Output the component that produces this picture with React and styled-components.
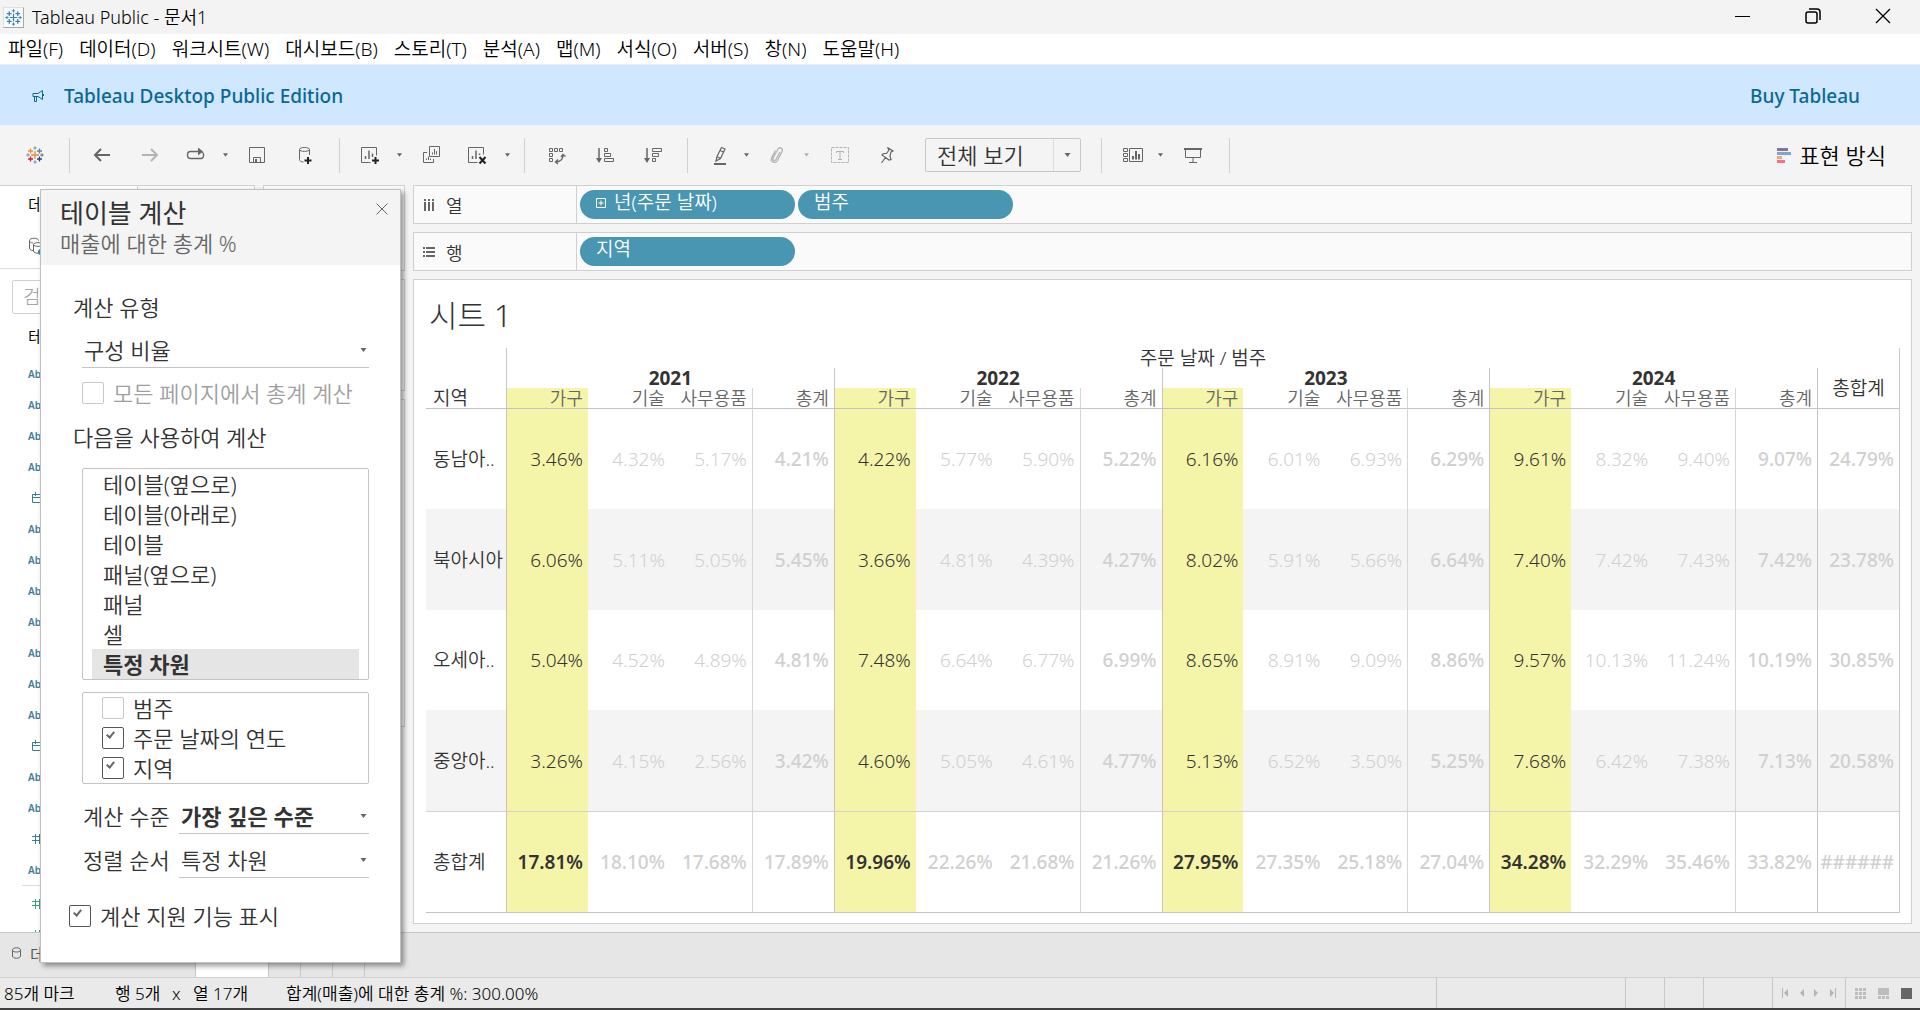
import React from "react";
import styled, { createGlobalStyle, css } from "styled-components";

const GlobalStyle = createGlobalStyle`
  *, *::before, *::after { box-sizing: border-box; }
  body {
    margin: 0;
    background: #f4f4f4;
    color: #000;
    font-family: "Noto Sans", "Noto Sans CJK KR", sans-serif;
  }
  button, input, select {
    font: inherit;
    color: inherit;
    margin: 0;
    padding: 0;
    border: 0;
    background: none;
  }
  a { color: inherit; text-decoration: none; }
  svg { display: block; flex: none; }
`;

const Window = styled.div`
  position: relative;
  display: flex;
  flex-direction: column;
  height: 100vh;
  min-width: 1280px;
  border-bottom: 2px solid #404040;
  overflow: hidden;
`;

/* ---------- title bar, menu, banner ---------- */

const TitleBar = styled.header`
  display: flex;
  align-items: center;
  flex: none;
  height: 34px;
  padding: 0 2px 0 3px;
  background: #f3f3f3;
  font-size: 18px;
  font-weight: 350;
  line-height: 24px;
`;

const AppIcon = styled.span`
  display: grid;
  place-items: center;
  width: 21px;
  height: 21px;
  margin-right: 8px;
  background: #fafafa;
  border: 1px solid #e0e0e0;
  border-right-color: #a8a8a8;
  border-bottom-color: #a8a8a8;
`;

const WindowButtons = styled.div`
  display: flex;
  height: 100%;
  margin-left: auto;
`;

const WindowButton = styled.button`
  display: grid;
  place-items: center;
  width: 70px;
  height: 32px;
`;

const MenuBar = styled.nav`
  display: flex;
  align-items: center;
  flex: none;
  gap: 16px;
  height: 31px;
  padding-left: 8px;
  background: #fff;
  border-bottom: 1px solid #ececec;
  font-size: 19px;
  font-weight: 350;
  line-height: 26px;
  white-space: nowrap;
`;

const Banner = styled.div`
  display: flex;
  align-items: center;
  flex: none;
  height: 60px;
  padding: 2px 60px 0 32px;
  background: #cfe8ff;
  color: #0b6795;
  font-size: 19px;
  font-weight: 500;
`;

const BannerLink = styled.a`
  margin-left: ${(p) => (p.$end ? "auto" : "20px")};
`;

/* ---------- toolbar ---------- */

const Toolbar = styled.div`
  display: flex;
  align-items: center;
  flex: none;
  height: 60px;
  background: #f4f4f4;
  color: #666;
`;

const ToolGroup = styled.div`
  display: flex;
  align-items: center;
  height: 35px;
  padding-left: ${(p) => p.$start || 0}px;
  padding-right: ${(p) => p.$end || 0}px;
  border-right: 1px solid #d0d0d0;
`;

const Tool = styled.button`
  display: grid;
  place-items: center;
  width: ${(p) => p.$w || 48}px;
  height: 32px;
  opacity: ${(p) => (p.disabled ? 0.45 : 1)};
`;

const FitBox = styled.div`
  display: grid;
  grid-template-columns: 1fr 27px;
  align-items: center;
  width: 156px;
  height: 34px;
  margin-left: 22px;
  border: 1px solid #c8c8c8;
  border-radius: 2px;
  color: #333;
`;

const FitSelect = styled.select`
  grid-area: 1 / 1 / 2 / 3;
  height: 32px;
  padding-left: 11px;
  appearance: none;
  font-size: 22px;
  font-weight: 350;
`;

const FitCaret = styled.span`
  grid-area: 1 / 2;
  display: grid;
  place-items: center;
  height: 32px;
  border-left: 1px solid #dcdcdc;
  pointer-events: none;
`;

const ShowMe = styled.button`
  display: flex;
  align-items: center;
  gap: 8px;
  margin-left: auto;
  padding-right: 34px;
  color: #000;
  font-size: 22px;
  font-weight: 350;
  line-height: 30px;
`;

/* ---------- workspace ---------- */

const Workspace = styled.div`
  display: flex;
  flex: 1;
  min-height: 0;
  padding-right: 8px;
  padding-bottom: 8px;
`;

const DataPane = styled.aside`
  display: flex;
  flex-direction: column;
  flex: none;
  width: 255px;
  margin-bottom: -8px;
  background: #fff;
  border: 1px solid #d0d0d0;
  border-width: 1px 1px 0 0;
  overflow: hidden;
`;

const PaneTabs = styled.div`
  display: grid;
  grid-template-columns: 137px 1fr;
  flex: none;
  height: 34px;
  font-size: 17px;
  font-weight: 350;
`;

const PaneTab = styled.button`
  padding-left: 28px;
  text-align: left;
  background: ${(p) => (p.$active ? "#fff" : "#fafafa")};
  border-left: ${(p) => (p.$active ? "0" : "1px solid #d0d0d0")};
`;

const SourceRow = styled.div`
  display: flex;
  align-items: center;
  flex: none;
  height: 49px;
  padding: 4px 0 0 28px;
  border-bottom: 1px solid #dcdcdc;
`;

const SearchInput = styled.input`
  flex: none;
  width: 200px;
  height: 34px;
  margin: 11px 0 0 12px;
  padding-left: 10px;
  border: 1px solid #d0d0d0;
  border-radius: 2px;
  font-size: 19px;
  font-weight: 300;
  &::placeholder { color: #999; }
`;

const PaneHeading = styled.h2`
  flex: none;
  margin: 11px 0 0 28px;
  font-size: 17px;
  font-weight: 350;
  line-height: 24px;
`;

const FieldList = styled.ul`
  flex: none;
  margin: ${(p) => (p.$measures ? "0 0 0 22px" : "9px 0 0")};
  padding: ${(p) => (p.$measures ? "2px 0 0 6px" : "0 0 0 28px")};
  border-top: ${(p) => (p.$measures ? "1px solid #dcdcdc" : "0")};
  list-style: none;
`;

const Field = styled.li`
  display: flex;
  align-items: center;
  height: 31px;
  color: ${(p) => (p.$measure ? "#3aa17e" : "#3a7d9c")};
  font-size: 10px;
  font-weight: 600;
  svg { margin-left: 4px; }
`;

const CardColumn = styled.div`
  display: flex;
  flex-direction: column;
  flex: none;
  gap: 8px;
  width: 142px;
  margin: 0 8px;
`;

const Card = styled.section`
  height: ${(p) => p.$h}px;
  background: #fafafa;
  border: 1px solid #d0d0d0;
`;

const Main = styled.main`
  display: flex;
  flex: 1;
  flex-direction: column;
  gap: 8px;
  min-width: 0;
`;

const Shelf = styled.section`
  display: grid;
  grid-template-columns: 163px 1fr;
  flex: none;
  height: 39px;
  background: #fafafa;
  border: 1px solid #d0d0d0;
`;

const ShelfLabel = styled.h3`
  display: flex;
  align-items: center;
  gap: 11px;
  margin: 0;
  padding-left: 9px;
  border-right: 1px solid #d0d0d0;
  color: #333;
  font-size: 18px;
  font-weight: 350;
`;

const Pills = styled.div`
  display: flex;
  align-items: center;
  gap: 3px;
  padding-left: 3px;
`;

const Pill = styled.button`
  display: flex;
  align-items: center;
  gap: 8px;
  width: 215px;
  height: 29px;
  padding: 0 16px 4px;
  border-radius: 15px;
  background: #4996b2;
  color: #fff;
  font-size: 19px;
  font-weight: 350;
  line-height: 25px;
  white-space: nowrap;
`;

const Sheet = styled.section`
  flex: 1;
  min-height: 0;
  padding: 15px 11px 0 12px;
  background: #fff;
  border: 1px solid #d0d0d0;
  overflow: hidden;
`;

const SheetTitle = styled.h1`
  margin: 0;
  padding-left: 3px;
  color: #333;
  font-size: 31px;
  font-weight: 300;
  line-height: 40px;
`;

/* ---------- crosstab ---------- */

const Crosstab = styled.table`
  width: 100%;
  margin-top: 13px;
  table-layout: fixed;
  border-collapse: separate;
  border-spacing: 0;
  border-right: 1px solid #c8c8c8;
  color: #333;
  font-size: 19px;
  line-height: 20px;
`;

const RowHeaderCol = styled.col`
  width: 80px;
`;

const edge = css`
  border-left: ${(p) =>
    p.$edge === "year" ? "1px solid #c4c4c4" : p.$edge === "total" ? "1px solid #d6d6d6" : "0"};
`;

const HeadCell = styled.th`
  ${edge}
  height: 20px;
  padding: 0;
  font-weight: ${(p) => (p.$bold ? 700 : 350)};
  white-space: nowrap;
  border-bottom: ${(p) => (p.$last ? "1px solid #c4c4c4" : "0")};
`;

const CornerCell = styled(HeadCell)`
  padding-left: 7px;
  text-align: left;
  vertical-align: bottom;
`;

const CategoryCell = styled(HeadCell)`
  height: 21px;
  padding-right: 5px;
  text-align: right;
  color: #666;
  font-size: 18px;
  background: ${(p) => (p.$hot ? "#f5f5a9" : "transparent")};
`;

const BodyRow = styled.tr`
  height: ${(p) => (p.$grand ? 102 : p.$band ? 101 : 100)}px;
  background: ${(p) => (p.$band ? "#f4f4f4" : "#fff")};
  th, td {
    border-top: ${(p) => (p.$grand ? "1px solid #d2d2d2" : "0")};
    border-bottom: ${(p) => (p.$grand ? "1px solid #c4c4c4" : "0")};
  }
`;

const RowHeader = styled.th`
  padding: 0 0 0 7px;
  text-align: left;
  font-weight: 350;
  white-space: nowrap;
`;

const Value = styled.td`
  ${edge}
  padding: 0 5px 0 0;
  text-align: right;
  white-space: nowrap;
  color: ${(p) => (p.$hot ? "#333" : "#d0d0d0")};
  background: ${(p) => (p.$hot ? "#f5f5a9" : "transparent")};
  font-weight: ${(p) => p.$weight};
`;

/* ---------- bottom bars ---------- */

const SheetTabs = styled.div`
  display: flex;
  flex: none;
  height: 46px;
  background: #e6e6e6;
  border-top: 1px solid #c8c8c8;
  border-bottom: 1px solid #d0d0d0;
  color: #555;
  font-size: 17px;
  font-weight: 350;
`;

const SourceTab = styled.button`
  display: flex;
  align-items: center;
  gap: 8px;
  width: 195px;
  padding: 0 0 4px 12px;
`;

const SheetTab = styled.button`
  width: ${(p) => (p.$active ? 74 : 32)}px;
  background: ${(p) => (p.$active ? "#fff" : "transparent")};
  border-left: ${(p) => (p.$active ? "1px solid #c8c8c8" : "0")};
  border-right: 1px solid #c8c8c8;
`;

const StatusBar = styled.footer`
  display: flex;
  align-items: stretch;
  flex: none;
  height: 30px;
  padding-left: 4px;
  background: #eaeaea;
  font-size: 17px;
  font-weight: 350;
  line-height: 32px;
  white-space: pre;
`;

const StatusText = styled.span`
  width: ${(p) => p.$w}px;
`;

const StatusSlots = styled.div`
  display: flex;
  margin-left: auto;
`;

const StatusSlot = styled.div`
  display: flex;
  align-items: center;
  justify-content: center;
  gap: ${(p) => p.$gap || 0}px;
  width: ${(p) => p.$w}px;
  border-left: 1px solid #c8c8c8;
`;

const TinyButton = styled.button`
  display: grid;
  place-items: center;
`;

/* ---------- table calculation dialog ---------- */

const Dialog = styled.section`
  position: absolute;
  left: 40px;
  top: 189px;
  width: 361px;
  height: 774px;
  background: #fff;
  border: 1px solid #c0c0c0;
  box-shadow: 3px 3px 5px rgba(0, 0, 0, 0.4);
  color: #333;
  font-size: 22px;
  font-weight: 350;
  line-height: 30px;
  white-space: nowrap;
`;

const DialogHead = styled.header`
  display: flex;
  justify-content: space-between;
  align-items: flex-start;
  height: 75px;
  padding: 7px 12px 0 19px;
  background: #f4f4f4;
`;

const DialogTitle = styled.h2`
  margin: 0;
  font-size: 26px;
  font-weight: 400;
  line-height: 32px;
`;

const DialogSubtitle = styled.p`
  margin: 0;
  color: #666;
  line-height: 28px;
`;

const CloseButton = styled.button`
  padding-top: 6px;
`;

const DialogBody = styled.form`
  padding: 27px 31px 0 28px;
`;

const Label = styled.h3`
  margin: 0 0 0 4px;
  font-size: 22px;
  font-weight: 350;
`;

const ScopeHeading = styled(Label)`
  margin-top: 14px;
`;

const Indent = styled.div`
  padding-left: 13px;
`;

const DropRow = styled.div`
  display: grid;
  grid-template-columns: ${(p) => (p.$labelled ? "97px 1fr" : "1fr")};
  align-items: center;
  margin-top: ${(p) => p.$gap}px;
`;

const DropLabel = styled.label`
  padding-left: 1px;
`;

const DropBox = styled.div`
  display: grid;
  grid-template-columns: 1fr 16px;
  align-items: center;
  height: 36px;
  border-bottom: 1px solid #c4c4c4;
`;

const DropSelect = styled.select`
  grid-area: 1 / 1 / 2 / 3;
  height: 34px;
  padding-left: 2px;
  appearance: none;
  font-weight: ${(p) => (p.$bold ? 700 : 350)};
`;

const DropCaret = styled.span`
  grid-area: 1 / 2;
  justify-self: end;
  padding-right: 2px;
  pointer-events: none;
`;

const CheckLabel = styled.label`
  display: flex;
  align-items: center;
  gap: 9px;
  height: 30px;
  color: ${(p) => (p.$off ? "#a0a0a0" : "#333")};
`;

const PageTotals = styled.div`
  margin-top: 10px;
`;

const CheckBox = styled.input`
  position: relative;
  flex: none;
  width: 22px;
  height: 22px;
  appearance: none;
  background: #fff;
  border: 1px solid #c8c8c8;
  border-radius: 2px;
  &:checked { border-color: #555; }
  &:checked::before {
    content: "";
    position: absolute;
    left: 5px;
    top: 2px;
    width: 5px;
    height: 8px;
    border: solid #666;
    border-width: 0 2px 2px 0;
    transform: rotate(40deg);
  }
`;

const ScopeList = styled.fieldset`
  margin: 16px 0 0;
  padding: 0 9px;
  border: 1px solid #c4c4c4;
  border-radius: 2px;
  min-width: 0;
`;

const ScopeOption = styled.label`
  display: block;
  height: 30px;
  padding-left: 11px;
  background: ${(p) => (p.$selected ? "#e5e5e5" : "#fff")};
  font-weight: ${(p) => (p.$selected ? 700 : 350)};
`;

const ScopeRadio = styled.input`
  position: absolute;
  width: 1px;
  height: 1px;
  appearance: none;
  opacity: 0;
`;

const DimensionList = styled.fieldset`
  margin: 12px 0 0;
  padding: 0 0 0 19px;
  border: 1px solid #c4c4c4;
  border-radius: 2px;
  min-width: 0;
`;

const AssistRow = styled.div`
  margin-top: 23px;
`;

/* ---------- drawings ---------- */

const markPluses = [
  [9, 9, 4, "#eb8a3c"],
  [4.5, 5, 2.5, "#e8912d"],
  [13.5, 5, 2.5, "#5b879b"],
  [4.5, 13, 2.5, "#c72035"],
  [13.5, 13, 2.5, "#1f457e"],
  [9, 2, 1.7, "#7099a6"],
  [9, 16, 1.7, "#7b86b3"],
  [2, 9, 1.7, "#7b86b3"],
  [16, 9, 1.7, "#5b6591"],
];

function TableauMark({ size = 18, mono }) {
  return (
    <svg width={size} height={size} viewBox="0 0 18 18" fill="none" aria-hidden="true">
      {markPluses.map(([x, y, r, c]) => (
        <path
          key={`${x}-${y}`}
          d={`M${x - r} ${y}H${x + r}M${x} ${y - r}V${y + r}`}
          stroke={mono ? "#3385b5" : c}
          strokeWidth={r > 2 ? 1.3 : 1}
        />
      ))}
    </svg>
  );
}

function Caret({ color = "#666", w = 5 }) {
  return (
    <svg width={w} height="4" viewBox="0 0 6 4" aria-hidden="true">
      <path d="M0 0H6L3 4Z" fill={color} />
    </svg>
  );
}

function Icon({ w = 20, h = 20, children, color = "#666", sw = 1 }) {
  return (
    <svg width={w} height={h} viewBox={`0 0 ${w} ${h}`} fill="none" stroke={color} strokeWidth={sw} aria-hidden="true">
      {children}
    </svg>
  );
}

const icons = {
  back: <Icon sw={2}><path d="M18 10H3M9 4L3 10L9 16" /></Icon>,
  forward: <Icon sw={2}><path d="M2 10H17M11 4L17 10L11 16" /></Icon>,
  redo: <Icon><path strokeWidth="1.4" d="M13 6.5H4.5A3 3.5 0 0 0 4.5 13.5H15.5A3 3.5 0 0 0 16 7" /><path d="M12 2.5V10.5L17 6.5Z" fill="#666" stroke="none" /></Icon>,
  save: <Icon><path d="M2.500 2.500H17.500V17.500H2.500ZM6.500 17.500V12.500H13.500V17.500" /><path d="M8 14H10V17H8Z" fill="#666" stroke="none" /></Icon>,
  source: <Icon><path d="M14.500 10V4.500C14.500 1.800 4.500 1.800 4.500 4.500V14.500C4.500 16 6 17 8.500 17M4.500 4.500C4.500 7 14.500 7 14.500 4.500" /><path stroke="#222" strokeWidth="2" d="M13 12V19M9.500 15.500H16.500" /></Icon>,
  newSheet: <Icon><path d="M10.500 17.500H1.500V2.500H16.500V10.500" /><path strokeWidth="1.500" d="M5.500 14V11M9 14V5.500M12.500 12V8.500" /><path stroke="#222" strokeWidth="2" d="M15.500 12V19M12 15.500H19" /></Icon>,
  duplicate: <Icon><path d="M8.500 1.500H18.500V11.500H8.500ZM6 7.500H2.500V17.500H12.500V14" /><path d="M11.500 9.500V7.500M13.500 9.500V4M15.500 9.500V6M5.500 15V13.500M7.500 15V11.500M9.500 15V13.500" /></Icon>,
  clear: <Icon><path d="M10.500 17.500H1.500V2.500H16.500V9.500" /><path strokeWidth="1.500" d="M5.500 14V11M9 14V5.500M12.500 10V8.500" /><path stroke="#222" strokeWidth="2" d="M12.500 12L18.500 18.500M18.500 12L12.500 18.500" /></Icon>,
  swap: <Icon><path d="M2.500 3.500H5.500V6.500H2.500ZM7.500 3.500H10.500V6.500H7.500ZM12.500 3.500H15.500V6.500H12.500ZM2.500 8.500H5.500V11.500H2.500ZM2.500 13.500H5.500V16.500H2.500Z" /><path strokeWidth="1.400" d="M16 10C16 14 14 16.500 9 17M14 12L16 9.500L18.500 11.500M11 14.500L8.500 17L11 19" /></Icon>,
  asc: <Icon><path strokeWidth="1.500" d="M4 3V15" /><path fill="#666" stroke="none" d="M1 13H7L4 18Z" /><path d="M9.500 3.500H12.500V6.500H9.500ZM9.500 8.500H15.500V11.500H9.500ZM9.500 13.500H18.500V16.500H9.500Z" /></Icon>,
  desc: <Icon><path strokeWidth="1.500" d="M4 3V15" /><path fill="#666" stroke="none" d="M1 13H7L4 18Z" /><path d="M9.500 3.500H18.500V6.500H9.500ZM9.500 8.500H15.500V11.500H9.500ZM9.500 13.500H12.500V16.500H9.500Z" /></Icon>,
  highlight: <Icon><path strokeWidth="1.200" d="M11.500 2.500L15 4L10.500 13.500L6 16L7 11.500ZM7 11.500L10.500 13.500M10 5.500L13.500 7" /><path strokeWidth="2" d="M4 19H16" /></Icon>,
  clip: <Icon><path strokeWidth="1.300" d="M13 7L9 14.500C8 16.500 5 15.500 6 13L11 4C12.500 1.500 16.500 3.500 15 6.500L10.500 15.500C8.500 19 3 17 4.500 13L8.500 5.500" /></Icon>,
  text: <Icon><path strokeDasharray="3 1" d="M1.500 2.500H18.500V17.500H1.500Z" /><path d="M6.500 8V6.500H13.500V8M10 6.500V14.500M8 14.500H12" /></Icon>,
  pin: <Icon><path strokeWidth="1.200" d="M10.500 2.500L16 6L14 7L13 11L14 14.500L12 15L5 10L6.500 8.500L9.500 8.500L12 5ZM8.500 12.500L4.500 18" /></Icon>,
  cards: <Icon><path d="M.5 3.500H4.500V6.500H.5ZM.5 8.500H4.500V11.500H.5ZM.5 13.500H4.500V16.500H.5ZM6.500 3.500H19.500V16.500H6.500Z" /><path strokeWidth="2" d="M10 14.500V11M13 14.500V6M16 14.500V9" /></Icon>,
  present: <Icon><path strokeWidth="2" d="M1 4H19" /><path d="M2.500 4V12.500H17.500V4M10 12.500V17.500M6 17.500H14" /></Icon>,
};

function CalendarIcon() {
  return (
    <Icon w={12} h={12} color="#3a7d9c">
      <path d="M.5 2.500H11.500V10.500H.5ZM.5 5.500H11.500M3.500 0V4M8.500 0V4" />
    </Icon>
  );
}

function HashIcon({ color }) {
  return (
    <Icon w={10} h={12} color={color}>
      <path d="M3.500 1V11M7.500 1V11M0 3.500H10M0 7.500H10" />
    </Icon>
  );
}

/* ---------- data ---------- */

const menus = ["파일(F)", "데이터(D)", "워크시트(W)", "대시보드(B)", "스토리(T)", "분석(A)", "맵(M)", "서식(O)", "서버(S)", "창(N)", "도움말(H)"];
const years = ["2021", "2022", "2023", "2024"];
const categories = ["가구", "기술", "사무용품", "총계"];

const rows = [
  ["동남아..", "3.46 4.32 5.17 4.21 4.22 5.77 5.90 5.22 6.16 6.01 6.93 6.29 9.61 8.32 9.40 9.07 24.79"],
  ["북아시아", "6.06 5.11 5.05 5.45 3.66 4.81 4.39 4.27 8.02 5.91 5.66 6.64 7.40 7.42 7.43 7.42 23.78"],
  ["오세아..", "5.04 4.52 4.89 4.81 7.48 6.64 6.77 6.99 8.65 8.91 9.09 8.86 9.57 10.13 11.24 10.19 30.85"],
  ["중앙아..", "3.26 4.15 2.56 3.42 4.60 5.05 4.61 4.77 5.13 6.52 3.50 5.25 7.68 6.42 7.38 7.13 20.58"],
  ["총합계", "17.81 18.10 17.68 17.89 19.96 22.26 21.68 21.26 27.95 27.35 25.18 27.04 34.28 32.29 35.46 33.82 ######"],
].map(([name, values]) => ({ name, values: values.split(" ") }));

const fields = ["a", "a", "a", "a", "d", "a", "a", "a", "a", "a", "a", "a", "d", "a", "a", "n", "a"];
const scopes = ["테이블(옆으로)", "테이블(아래로)", "테이블", "패널(옆으로)", "패널", "셀", "특정 차원"];
const dimensions = [["범주", false], ["주문 날짜의 연도", true], ["지역", true]];

const edgeAt = (i) => (i % 4 === 0 ? "year" : i % 4 === 3 ? "total" : "none");

function SalesTable() {
  return (
    <Crosstab>
      <colgroup>
        <RowHeaderCol />
        {rows[0].values.map((_, i) => <col key={i} />)}
      </colgroup>
      <thead>
        <tr>
          <CornerCell rowSpan={3} $last scope="col">지역</CornerCell>
          <HeadCell colSpan={17} $edge="year">주문 날짜 / 범주</HeadCell>
        </tr>
        <tr>
          {years.map((y) => <HeadCell key={y} colSpan={4} $edge="year" $bold>{y}</HeadCell>)}
          <HeadCell rowSpan={2} $edge="year" $last>총합계</HeadCell>
        </tr>
        <tr>
          {years.flatMap((y) =>
            categories.map((c, i) => (
              <CategoryCell key={y + c} $edge={edgeAt(i)} $hot={i === 0} $last scope="col">{c}</CategoryCell>
            ))
          )}
        </tr>
      </thead>
      <tbody>
        {rows.map((row, r) => {
          const grand = r === 4;
          return (
            <BodyRow key={row.name} $band={r % 2 === 1} $grand={grand}>
              <RowHeader scope="row">{row.name}</RowHeader>
              {row.values.map((v, i) => {
                const hot = i % 4 === 0 && i < 16;
                const total = i % 4 === 3 || i === 16;
                const weight = grand ? (hot ? 600 : 500) : total ? 500 : hot ? 350 : 300;
                return (
                  <Value key={i} $edge={edgeAt(i)} $hot={hot} $weight={weight}>
                    {v.startsWith("#") ? v : `${v}%`}
                  </Value>
                );
              })}
            </BodyRow>
          );
        })}
      </tbody>
    </Crosstab>
  );
}

function Drop({ id, value, bold }) {
  return (
    <DropBox>
      <DropSelect id={id} $bold={bold} defaultValue={value} aria-label={id === "calc-type" ? "계산 유형" : undefined}>
        <option>{value}</option>
      </DropSelect>
      <DropCaret><Caret w={7} /></DropCaret>
    </DropBox>
  );
}

function TableCalcDialog() {
  return (
    <Dialog role="dialog" aria-labelledby="calc-title">
      <DialogHead>
        <div>
          <DialogTitle id="calc-title">테이블 계산</DialogTitle>
          <DialogSubtitle>매출에 대한 총계 %</DialogSubtitle>
        </div>
        <CloseButton aria-label="닫기">
          <Icon w={12} h={12}><path d="M.5 .5L11.500 11.500M11.500 .5L.5 11.500" /></Icon>
        </CloseButton>
      </DialogHead>
      <DialogBody>
        <Label>계산 유형</Label>
        <Indent>
          <DropRow $gap={10}><Drop id="calc-type" value="구성 비율" /></DropRow>
          <PageTotals>
            <CheckLabel $off>
              <CheckBox type="checkbox" disabled />
              모든 페이지에서 총계 계산
            </CheckLabel>
          </PageTotals>
        </Indent>
        <ScopeHeading>다음을 사용하여 계산</ScopeHeading>
        <Indent>
          <ScopeList aria-label="다음을 사용하여 계산">
            {scopes.map((s) => (
              <ScopeOption key={s} $selected={s === "특정 차원"}>
                <ScopeRadio type="radio" name="scope" value={s} defaultChecked={s === "특정 차원"} />
                {s}
              </ScopeOption>
            ))}
          </ScopeList>
          <DimensionList aria-label="특정 차원">
            {dimensions.map(([name, on]) => (
              <CheckLabel key={name}>
                <CheckBox type="checkbox" defaultChecked={on} />
                {name}
              </CheckLabel>
            ))}
          </DimensionList>
          <DropRow $labelled $gap={14}>
            <DropLabel htmlFor="calc-level">계산 수준</DropLabel>
            <Drop id="calc-level" value="가장 깊은 수준" bold />
          </DropRow>
          <DropRow $labelled $gap={8}>
            <DropLabel htmlFor="calc-sort">정렬 순서</DropLabel>
            <Drop id="calc-sort" value="특정 차원" />
          </DropRow>
        </Indent>
        <AssistRow>
          <CheckLabel>
            <CheckBox type="checkbox" defaultChecked />
            계산 지원 기능 표시
          </CheckLabel>
        </AssistRow>
      </DialogBody>
    </Dialog>
  );
}

export default function App() {
  return (
    <Window>
      <GlobalStyle />
      <TitleBar>
        <AppIcon><TableauMark size={17} mono /></AppIcon>
        Tableau Public - 문서1
        <WindowButtons>
          <WindowButton aria-label="최소화">
            <Icon w={16} h={16} color="#000"><path d="M0 8.500H15" /></Icon>
          </WindowButton>
          <WindowButton aria-label="이전 크기로 복원">
            <Icon w={16} h={16} color="#000" sw={1.5}>
              <rect x="1" y="4" width="11" height="11" rx="2" />
              <path d="M4 1H12A3 3 0 0 1 15 4V12" />
            </Icon>
          </WindowButton>
          <WindowButton aria-label="닫기">
            <Icon w={16} h={16} color="#000" sw={1.3}><path d="M1 1L15 15M15 1L1 15" /></Icon>
          </WindowButton>
        </WindowButtons>
      </TitleBar>
      <MenuBar>
        {menus.map((m) => <button key={m}>{m}</button>)}
      </MenuBar>
      <Banner>
        <Icon w={12} h={12} color="#0b6795">
          <path d="M1 3.500H6L10.500 .5V9.500L6 6.500H1ZM2.500 6.500V11.500H4.500V6.500M11.500 4V6" />
        </Icon>
        <BannerLink href="#desktop">Tableau Desktop Public Edition</BannerLink>
        <BannerLink href="#buy" $end>Buy Tableau</BannerLink>
      </Banner>

      <Toolbar>
        <ToolGroup>
          <Tool $w={69} aria-label="시작 페이지"><TableauMark /></Tool>
        </ToolGroup>
        <ToolGroup $start={8} $end={10}>
          <Tool aria-label="실행 취소">{icons.back}</Tool>
          <Tool aria-label="다시 실행" disabled>{icons.forward}</Tool>
          <Tool $w={44} aria-label="재생">{icons.redo}</Tool>
          <Tool $w={15} aria-label="재생 메뉴"><Caret /></Tool>
          <Tool aria-label="저장">{icons.save}</Tool>
          <Tool aria-label="새 데이터 원본">{icons.source}</Tool>
        </ToolGroup>
        <ToolGroup $start={10} $end={10}>
          <Tool $w={40} aria-label="새 워크시트">{icons.newSheet}</Tool>
          <Tool $w={18} aria-label="새 워크시트 메뉴"><Caret /></Tool>
          <Tool $w={46} aria-label="복제">{icons.duplicate}</Tool>
          <Tool $w={46} aria-label="시트 지우기">{icons.clear}</Tool>
          <Tool $w={14} aria-label="시트 지우기 메뉴"><Caret /></Tool>
        </ToolGroup>
        <ToolGroup $start={8} $end={10}>
          <Tool aria-label="행과 열 바꾸기">{icons.swap}</Tool>
          <Tool aria-label="오름차순 정렬">{icons.asc}</Tool>
          <Tool aria-label="내림차순 정렬">{icons.desc}</Tool>
        </ToolGroup>
        <ToolGroup $start={10} $end={20}>
          <Tool $w={44} aria-label="하이라이트">{icons.highlight}</Tool>
          <Tool $w={8} aria-label="하이라이트 메뉴"><Caret /></Tool>
          <Tool $w={53} aria-label="그룹" disabled>{icons.clip}</Tool>
          <Tool $w={6} aria-label="그룹 메뉴" disabled><Caret /></Tool>
          <Tool $w={62} aria-label="마크 레이블" disabled>{icons.text}</Tool>
          <Tool $w={32} aria-label="축 고정">{icons.pin}</Tool>
          <FitBox>
            <FitSelect aria-label="맞춤" defaultValue="전체 보기"><option>전체 보기</option></FitSelect>
            <FitCaret><Caret w={7} /></FitCaret>
          </FitBox>
        </ToolGroup>
        <ToolGroup $start={8} $end={7}>
          <Tool $w={46} aria-label="카드 표시">{icons.cards}</Tool>
          <Tool $w={8} aria-label="카드 메뉴"><Caret /></Tool>
          <Tool $w={58} aria-label="프레젠테이션">{icons.present}</Tool>
        </ToolGroup>
        <ShowMe>
          <svg width="14" height="15" viewBox="0 0 14 15" aria-hidden="true">
            <path fill="#86759b" d="M0 0H11V3H0Z" />
            <path fill="#7fa6cf" d="M0 4H14V7H0Z" />
            <path fill="#f7a77b" d="M0 8H5V11H0Z" />
            <path fill="#fb6f80" d="M0 12H8V15H0Z" />
          </svg>
          표현 방식
        </ShowMe>
      </Toolbar>

      <Workspace>
        <DataPane>
          <PaneTabs>
            <PaneTab $active>데이터</PaneTab>
            <PaneTab aria-label="분석" />
          </PaneTabs>
          <SourceRow>
            <Icon w={18} h={18}>
              <path d="M1.500 3.500C1.500 .5 10.500 .5 10.500 3.500M1.500 3.500V11C1.500 13 4 13.500 5 13.500M5.500 7.500C5.500 5 14.500 5 14.500 7.500V14C14.500 17 5.500 17 5.500 14ZM5.500 7.500C5.500 10 14.500 10 14.500 7.500M1.500 3.500C1.500 5 3 6 5 6" />
              <circle cx="13" cy="15" r="3" fill="#2f8bab" stroke="none" />
            </Icon>
          </SourceRow>
          <SearchInput aria-label="검색" placeholder="검색" />
          <PaneHeading>테이블</PaneHeading>
          <FieldList>
            {fields.map((kind, i) => (
              <Field key={i}>
                {kind === "a" ? "Abc" : kind === "d" ? <CalendarIcon /> : <HashIcon color="#3a7d9c" />}
              </Field>
            ))}
          </FieldList>
          <FieldList $measures>
            <Field $measure><HashIcon color="#3aa17e" /></Field>
            <Field $measure><HashIcon color="#3aa17e" /></Field>
          </FieldList>
        </DataPane>
        <CardColumn>
          <Card $h={86} />
          <Card $h={112} />
          <Card $h={328} />
        </CardColumn>
        <Main>
          <Shelf>
            <ShelfLabel>
              <Icon w={12} h={12} sw={2}><path d="M2 0V2M2 3V12M6 0V2M6 3V12M10 0V2M10 3V12" /></Icon>
              열
            </ShelfLabel>
            <Pills>
              <Pill>
                <Icon w={10} h={10} color="#fff"><path d="M.5 .5H9.500V9.500H.5ZM5 2.500V7.500M2.500 5H7.500" /></Icon>
                년(주문 날짜)
              </Pill>
              <Pill>범주</Pill>
            </Pills>
          </Shelf>
          <Shelf>
            <ShelfLabel>
              <Icon w={12} h={12} sw={2}><path d="M0 2H2M3 2H12M0 6H2M3 6H12M0 10H2M3 10H12" /></Icon>
              행
            </ShelfLabel>
            <Pills><Pill>지역</Pill></Pills>
          </Shelf>
          <Sheet>
            <SheetTitle>시트 1</SheetTitle>
            <SalesTable />
          </Sheet>
        </Main>
      </Workspace>

      <SheetTabs>
        <SourceTab>
          <Icon w={10} h={12}><path d="M.5 3C.5 0 8.500 0 8.500 3V9C8.500 12 .5 12 .5 9ZM.5 3.500C.5 5.500 8.500 5.500 8.500 3.500" /></Icon>
          데이터 원본
        </SourceTab>
        <SheetTab $active aria-label="시트 1" />
        <SheetTab aria-label="새 워크시트" />
        <SheetTab aria-label="새 대시보드" />
        <SheetTab aria-label="새 스토리" />
      </SheetTabs>
      <StatusBar>
        <StatusText $w={111}>85개 마크</StatusText>
        <StatusText $w={57}>행 5개</StatusText>
        <StatusText $w={21}>x</StatusText>
        <StatusText $w={93}>열 17개</StatusText>
        <span>합계(매출)에 대한 총계 %: 300.00%</span>
        <StatusSlots>
          <StatusSlot $w={189} />
          <StatusSlot $w={39} />
          <StatusSlot $w={39} />
          <StatusSlot $w={69} />
          <StatusSlot $w={73} $gap={10}>
            <TinyButton aria-label="처음"><Icon w={7} h={10} color="#b4b4b4"><path d="M.5 0V10" /><path d="M6 1V9L2 5Z" fill="#b4b4b4" stroke="none" /></Icon></TinyButton>
            <TinyButton aria-label="이전"><Icon w={5} h={10} color="#b4b4b4"><path d="M5 1V9L1 5Z" fill="#b4b4b4" stroke="none" /></Icon></TinyButton>
            <TinyButton aria-label="다음"><Icon w={5} h={10} color="#b4b4b4"><path d="M0 1V9L4 5Z" fill="#b4b4b4" stroke="none" /></Icon></TinyButton>
            <TinyButton aria-label="마지막"><Icon w={7} h={10} color="#b4b4b4"><path d="M6.500 0V10" /><path d="M1 1V9L5 5Z" fill="#b4b4b4" stroke="none" /></Icon></TinyButton>
          </StatusSlot>
          <StatusSlot $w={75} $gap={12}>
            <TinyButton aria-label="시트 정렬기"><Icon w={11} h={11} color="#bdbdbd" sw={3}><path strokeDasharray="3 1" d="M0 1.500H11M0 5.500H11M0 9.500H11" /></Icon></TinyButton>
            <TinyButton aria-label="필름 스트립"><Icon w={11} h={11} color="#bdbdbd" sw={3}><path strokeDasharray="3 1" d="M0 9.500H11" /><path d="M0 0H11V7H0Z" fill="#bdbdbd" stroke="none" /></Icon></TinyButton>
            <TinyButton aria-label="탭"><Icon w={11} h={11}><path d="M0 0H11V11H0Z" fill="#666" stroke="none" /></Icon></TinyButton>
          </StatusSlot>
        </StatusSlots>
      </StatusBar>

      <TableCalcDialog />
    </Window>
  );
}
